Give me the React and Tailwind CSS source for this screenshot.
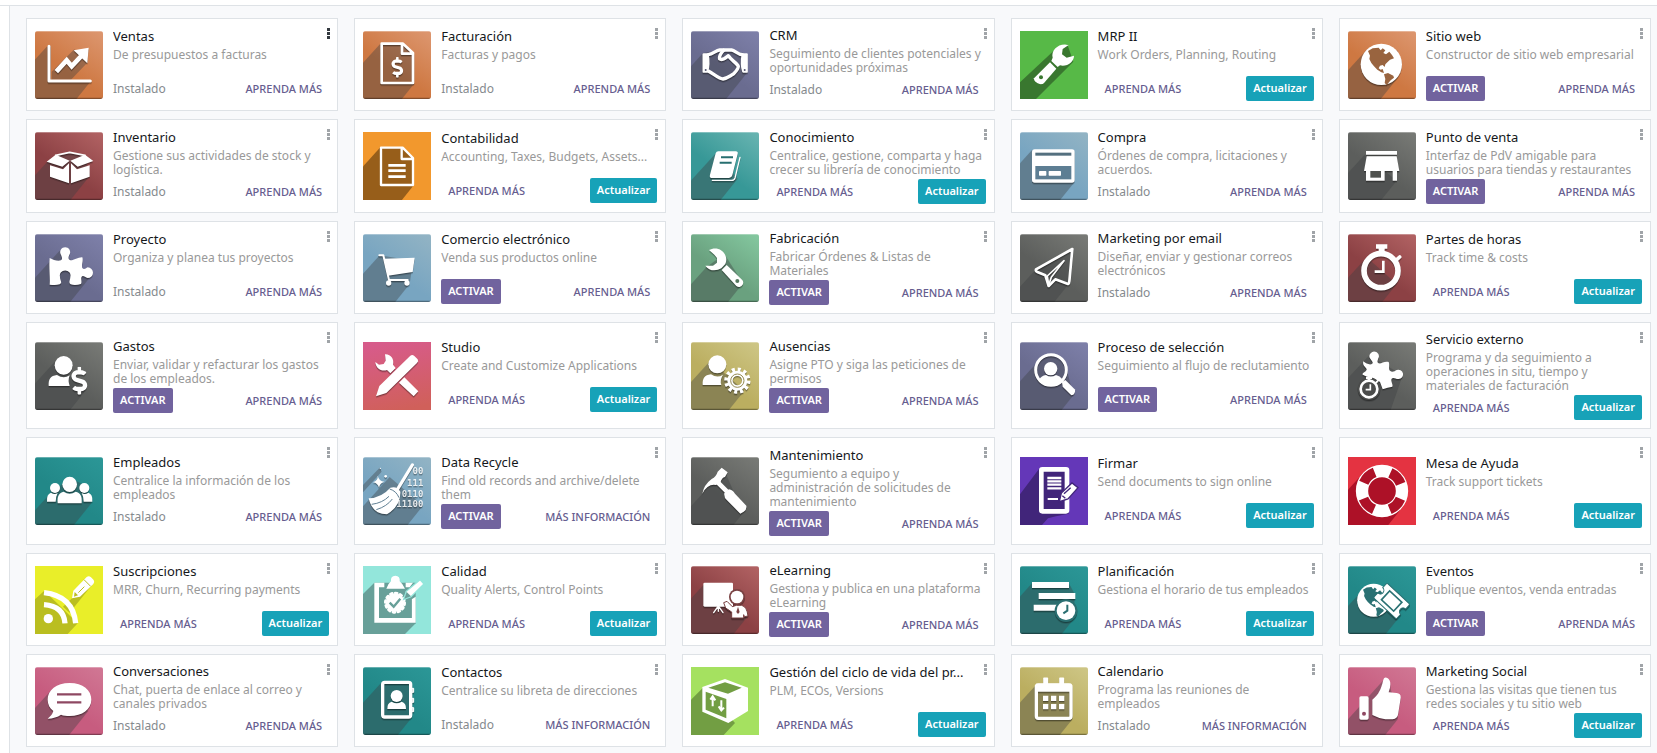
import { FaDollarSign } from 'react-icons/fa';

const W = '#fff';

/* Long diagonal shadow cast from the top-left point (ax, ay) and the bottom-right point (cx, cy). */
function cast(ax, ay, cx, cy, inner = '') {
  return `M${ax},${ay} L0,${ay + ax * 1.1} V204 H${cx - (204 - cy) * 0.8} L${cx},${cy} ${inner} Z`;
}

const PUZZLE =
  'M44,72 C55,78 68,82 78,79 C84,75 80,68 77,61 A15,15 0 1 1 104,61 C100,68 98,76 106,79 C116,80 130,69 142,70 C146,82 138,94 142,102 C146,108 152,104 158,100 A16,16 0 1 1 158,132 C150,130 144,122 140,128 C136,136 142,142 138,150 C128,153 116,154 107,151 C99,145 106,138 106,128 A16,15 0 1 0 75,128 C74,138 84,146 74,151 C64,154 54,153 44,152 C46,130 41,100 44,72 Z';

const THEMES = {
  orange: { a: '#ce7842', b: '#dc956d' },
  red: { a: '#8c4144', b: '#b06162' },
  purple: { a: '#6a6c90', b: '#7d7fa8' },
  gray: { a: '#5c5e5c', b: '#777975' },
  blue: { a: '#78a5c1', b: '#91b3c4' },
  aqua: { a: '#379897', b: '#66b3b0' },
  green: { a: '#6aa17f', b: '#83c69e' },
  khaki: { a: '#bbae60', b: '#cdc584' },
  teal: { a: '#228888', b: '#2b9696' },
  pink: { a: '#c75c7f', b: '#d07693' },
  leaf: { flat: '#57b947', shade: '#39772f' },
  amber: { flat: '#f2982d', shade: '#975e1a' },
  studio: { a: '#d0605a', b: '#d75b8a', square: true, vertical: true },
  violet: { flat: '#6437b8', shade: '#41257a' },
  help: { flat: '#e43341', shade: '#ad1127' },
  yellow: { flat: '#e9ee29', shade: '#babe20' },
  mint: { flat: '#93e6db', shade: '#68a099' },
  lime: { flat: '#a5e160', shade: '#729e43' },
};

const line = { fill: 'none', stroke: W, strokeLinecap: 'round', strokeLinejoin: 'round' };

/* Globe centred on (100, 100) with a radius of 62, land masses in the given colour. */
function Globe({ land }) {
  return (
    <>
      <circle cx="100" cy="100" r="62" fill={W} />
      <path
        d="M60,60 L74,52 L92,50 L98,58 L104,52 L112,58 L106,66 L114,70 L124,62 L132,72 L138,82 L126,86 L118,94 L112,100 L110,108 L104,102 L96,104 L92,112 L98,116 L104,114 L108,126 L100,124 L88,116 L78,106 L70,96 L64,84 L66,74 Z"
        fill={land}
      />
      <path d="M108,130 L120,126 L136,134 L138,140 L128,148 L116,162 L110,156 L112,144 Z" fill={land} />
    </>
  );
}

const ART = {
  ventas: {
    theme: 'orange',
    sh: cast(38, 44, 166, 152, 'L48,146 V44') + ' M118,55 L50,122 V146 H108 L156,96 Z',
    art: () => (
      <>
        <path d="M42,46 V150 H166" {...line} strokeWidth="9" />
        <path d="M64,122 L95,88 L110,106 L140,74" fill="none" stroke={W} strokeWidth="14" />
        <path d="M116,58 L161,50 L157,97 Z" fill={W} />
      </>
    ),
  },
  factura: {
    theme: 'orange',
    sh: cast(54, 36, 152, 160, 'V66 L122,36'),
    art: () => (
      <>
        <path d="M56,38 H120 L150,66 V156 H56 Z M117,40 V68 H150" {...line} strokeWidth="8" />
        <FaDollarSign x="72" y="78" size="62" color={W} />
      </>
    ),
  },
  crm: {
    theme: 'purple',
    sh: cast(36, 66, 166, 128, 'V68 L120,56 L90,56'),
    art: () => (
      <g {...line} strokeWidth="10">
        <path d="M38,70 V122 H48 C53,108 53,88 50,70 Z M167,70 V122 H157 C152,108 152,88 155,70 Z" fill={W} strokeWidth="7" />
        <path d="M52,71 C66,70 74,58 86,57 H122 C132,58 140,70 154,71" />
        <path d="M98,58 C90,66 84,76 86,84 C94,90 104,80 112,74 C120,88 138,96 142,106 C142,116 132,124 126,130 C118,134 108,142 96,144 C84,144 70,130 52,120" />
        <circle cx="44" cy="117" r="3" fill="#54566f" stroke="none" />
        <circle cx="161" cy="117" r="3" fill="#54566f" stroke="none" />
      </g>
    ),
  },
  mrp: {
    theme: 'leaf',
    sh: 'M98,62 L0,154 V204 H48 L160,92 L142,40 Z',
    art: (s) => (
      <>
        <path d="M146,42 L128,54 L126,70 L140,80 L162,74 C162,92 142,108 120,103 L113,108 L94,90 L98,80 C92,56 118,34 146,42Z" fill={W} />
        <path d="M90,94 L109,113 L72,156 C62,166 40,152 42,142 Z" fill={W} />
        <circle cx="63" cy="139" r="6" fill={s} />
      </>
    ),
  },
  web: {
    theme: 'orange',
    sh: cast(56, 56, 148, 142, 'L150,60 L100,42'),
    art: () => <Globe land="#99643f" />,
  },
  inventario: {
    theme: 'red',
    sh: cast(36, 90, 164, 132, 'L150,72 L104,62 L62,72'),
    art: () => (
      <>
        <path d="M62,70 L104,61 L150,70" {...line} strokeWidth="5" />
        <path d="M62,68 L35,89 L82,104 L104,86 Z M150,68 L175,87 L128,104 L106,86 Z" fill={W} />
        <path d="M45,100 L84,112 L102,94 V154 L45,134 Z M164,100 L126,112 L108,94 V154 L164,134 Z" fill={W} />
      </>
    ),
  },
  contabilidad: {
    theme: 'amber',
    sh: cast(52, 46, 152, 160, 'V80 L120,46'),
    art: () => (
      <>
        <path d="M54,47 H119 L150,78 V159 H54 Z M116,48 V81 H150" {...line} strokeWidth="7" />
        <path d="M76,100 H128 M76,116 H128 M76,134 H128" stroke={W} strokeWidth="8" />
      </>
    ),
  },
  conocimiento: {
    theme: 'aqua',
    sh: cast(76, 62, 140, 140),
    art: () => (
      <>
        <path d="M82,58 H134 Q142,58 140,66 L124,130 Q122,138 114,138 H64 Q54,138 57,128 L74,64 Q76,58 82,58 Z" fill={W} />
        <path d="M147,76 L132,138 Q130,145 122,145 H64" {...line} strokeWidth="4" />
        <path d="M90,76 H126 M86,92 H122" stroke="#276f70" strokeWidth="6" />
      </>
    ),
  },
  compra: {
    theme: 'blue',
    sh: cast(36, 54, 162, 152),
    art: () => (
      <>
        <rect x="36" y="52" width="128" height="100" rx="8" fill={W} />
        <rect x="46" y="62" width="108" height="9" fill="#54707f" />
        <rect x="46" y="102" width="108" height="40" fill="#5d7e93" />
        <rect x="57" y="117" width="22" height="14" rx="2" fill={W} />
        <rect x="86" y="117" width="37" height="14" rx="2" fill={W} />
      </>
    ),
  },
  pos: {
    theme: 'gray',
    sh: cast(50, 68, 146, 146),
    art: () => (
      <>
        <path d="M54,57 H147 V68 H54 Z M56,73 H146 L154,117 H147 V146 H134 V117 H110 V146 H54 V117 H48 Z" fill={W} />
        <rect x="67" y="117" width="32" height="20" fill="#50524f" />
      </>
    ),
  },
  proyecto: {
    theme: 'purple',
    sh: cast(74, 50, 168, 126),
    art: () => <path d={PUZZLE} fill={W} />,
  },
  ecommerce: {
    theme: 'blue',
    sh: cast(50, 64, 140, 150, 'L150,80'),
    art: () => (
      <>
        <path d="M49,64 H61 L78,138 H134" {...line} strokeWidth="6" />
        <path d="M64,74 L155,71 L149,114 L75,125 Z" fill={W} />
        <circle cx="77" cy="147" r="8" fill={W} />
        <circle cx="132" cy="147" r="8" fill={W} />
      </>
    ),
  },
  fabricacion: {
    theme: 'green',
    sh: cast(46, 100, 156, 148, 'L100,60'),
    art: () => (
      <>
        <path d="M54,48 C72,38 96,44 104,66 C107,76 106,84 103,90 L91,103 C76,112 54,112 43,95 L66,95 L78,86 V72 L70,62 Z" fill={W} />
        <path d="M107,93 L153,137 C164,148 148,166 136,156 L92,108 Z" fill={W} />
        <circle cx="139" cy="141" r="6" fill="#55785f" />
      </>
    ),
  },
  email: {
    theme: 'gray',
    sh: cast(46, 108, 146, 150, 'L158,44'),
    art: () => (
      <g {...line} strokeWidth="8">
        <path d="M157,45 L48,106 Q46,112 52,114 L76,124 L86,156 L106,136 L144,150 Q148,148 148,142 Z" />
        <path d="M132,80 L82,126 L86,154 L94,130 Z" strokeWidth="5" />
      </g>
    ),
  },
  horas: {
    theme: 'red',
    sh: cast(56, 70, 146, 150),
    art: () => (
      <>
        <circle cx="99" cy="110" r="51" fill="none" stroke={W} strokeWidth="17" />
        <path d="M84,31 H118 V44 H110 V56 H92 V44 H84 Z" fill={W} />
        <path d="M143,80 L155,69" {...line} strokeWidth="11" />
        <path d="M106,80 V113 H80" fill="none" stroke={W} strokeWidth="8" />
      </>
    ),
  },
  gastos: {
    theme: 'gray',
    sh: cast(62, 56, 150, 148),
    art: () => (
      <>
        <ellipse cx="86" cy="70" rx="27" ry="28" fill={W} />
        <path d="M41,132 C40,112 46,101 66,99 Q86,112 104,100 Q98,116 104,132 Z" fill={W} />
        <FaDollarSign x="91" y="74" size="84" color={W} />
      </>
    ),
  },
  studio: {
    theme: 'studio',
    sh: null,
    art: () => (
      <>
        <path d="M66,37 C84,36 94,52 90,68 L98,78 L82,94 L72,84 C56,90 38,80 37,60 L48,68 L62,66 L68,56 Z" fill={W} />
        <path d="M124,106 L166,148 L152,163 L108,122 Z" fill={W} />
        <path d="M39,163 L49,132 L142,41 Q148,36 154,42 L164,52 Q168,58 162,63 L70,153 Z" fill={W} />
      </>
    ),
  },
  ausencias: {
    theme: 'khaki',
    sh: cast(58, 56, 160, 146),
    art: () => (
      <>
        <ellipse cx="79" cy="67" rx="27" ry="27" fill={W} />
        <path d="M35,129 C34,110 40,99 60,97 Q79,110 96,98 Q86,114 91,129 Z" fill={W} />
        <circle cx="139" cy="116" r="22" fill="none" stroke={W} strokeWidth="16" />
        <circle cx="139" cy="116" r="33" fill="none" stroke={W} strokeWidth="13" strokeDasharray="9 8.28" />
        <circle cx="139" cy="116" r="20" fill="none" stroke="#958b52" strokeWidth="3" />
      </>
    ),
  },
  seleccion: {
    theme: 'purple',
    sh: cast(56, 56, 160, 160, 'L136,66 L92,38'),
    art: () => (
      <>
        <circle cx="93" cy="84" r="46" fill="none" stroke={W} strokeWidth="9" />
        <circle cx="92" cy="80" r="20" fill={W} />
        <path d="M58,112 Q64,101 78,99 Q92,108 108,99 Q120,102 127,112 Q112,130 92,130 Q72,130 58,112 Z" fill={W} />
        <path d="M126,120 L136,114 L164,142 Q168,150 160,158 L154,160 L128,134 Z" fill={W} />
      </>
    ),
  },
  servicio: {
    theme: 'gray',
    sh: 'M64,40 L0,108 V204 H128 L164,100 Z',
    art: () => (
      <>
        <path
          d="M46,58 C54,64 64,70 72,66 C77,62 72,58 68,52 A14,14 0 1 1 91,49 C89,56 86,60 92,64 C100,66 110,56 122,60 C126,68 120,80 126,86 C132,92 140,88 146,84 A14,14 0 1 1 152,111 C144,112 136,104 131,110 C127,118 136,126 133,134 C124,136 114,138 104,142 L96,120 C80,106 62,108 44,98 C42,92 56,90 56,82 C56,76 42,72 46,58 Z"
          fill={W}
        />
        <circle cx="63" cy="140" r="34" fill="#4b4c4b" />
        <circle cx="63" cy="141" r="25" fill="none" stroke={W} strokeWidth="8" />
        <path d="M54,104 H72 V111 H67 V118 H59 V111 H54 Z" fill={W} />
        <path d="M85,121 L90,116" {...line} strokeWidth="6" />
        <path d="M67,127 V143 H53" fill="none" stroke={W} strokeWidth="5" />
      </>
    ),
  },
  empleados: {
    theme: 'teal',
    sh: cast(38, 118, 168, 140, 'L148,84 L104,62'),
    art: () => (
      <>
        <ellipse cx="104" cy="82" rx="22" ry="23" fill={W} />
        <path d="M68,139 C66,116 72,108 86,104 Q104,116 122,104 C136,108 142,116 140,139 Z" fill={W} />
        <circle cx="60" cy="93" r="15" fill={W} />
        <circle cx="148" cy="93" r="15" fill={W} />
        <path d="M36,134 Q34,112 48,107 Q58,114 68,108 Q62,120 62,134 Z M172,134 Q174,112 160,107 Q150,114 140,108 Q146,120 146,134 Z" fill={W} />
      </>
    ),
  },
  recycle: {
    theme: 'blue',
    sh: cast(80, 60, 180, 146) + ' M50,32 L0,84 V106 L56,44 Z',
    art: () => (
      <>
        <path d="M44,56 Q48,72 64,74 Q50,78 48,92 Q44,78 30,76 Q46,70 44,56 Z" fill={W} />
        <circle cx="68" cy="58" r="4" fill={W} />
        <circle cx="52" cy="34" r="2" fill={W} />
        <g fill={W} fillOpacity=".85" fontFamily="DejaVu Sans Mono, monospace" fontSize="27" fontWeight="700" textAnchor="end">
          <text x="181" y="52">00</text>
          <text x="181" y="86">111</text>
          <text x="181" y="119">0110</text>
          <text x="181" y="151">11100</text>
        </g>
        <path d="M148,24 L104,96" {...line} strokeWidth="10" />
        <path d="M82,92 Q102,86 112,104 Q114,146 72,172 Q56,172 44,166 Q22,152 17,124 Q56,122 82,92 Z" fill={W} />
        <path d="M80,96 Q100,102 108,122 M26,142 Q58,138 78,118 M40,158 Q72,148 88,126" fill="none" stroke="#5f7f93" strokeWidth="3" />
      </>
    ),
  },
  mantenimiento: {
    theme: 'gray',
    sh: cast(36, 108, 156, 168, 'L100,40'),
    art: () => (
      <>
        <path d="M34,110 Q38,84 62,66 Q76,58 80,44 L92,32 L110,46 L102,60 Q92,62 88,78 L74,84 Q50,80 34,110 Z" fill={W} />
        <path d="M78,74 L108,104" stroke={W} strokeWidth="14" />
        <path d="M100,108 L114,97 Q124,98 132,110 L166,146 Q168,158 158,164 L148,170 L108,130 Q98,122 100,108 Z" fill={W} />
      </>
    ),
  },
  firmar: {
    theme: 'violet',
    sh: 'M57,36 L0,112 V204 H66 L84,184 L108,178 L146,170 V36 Z',
    art: (s) => (
      <>
        <rect x="64" y="37" width="77" height="126" rx="3" fill={s} stroke={W} strokeWidth="14" />
        <path d="M82,63 H124 M82,73 H124 M82,83 H124 M82,94 H124" stroke={W} strokeWidth="7" />
        <path d="M83,126 H114" stroke={W} strokeWidth="6" />
        <path d="M118,134 L124,108 L156,78 L174,92 L144,126 Z" fill={W} stroke={s} strokeWidth="4" />
        <path d="M132,110 L152,92 M127,116 L136,124" stroke={s} strokeWidth="4" />
      </>
    ),
  },
  ayuda: {
    theme: 'help',
    sh: cast(46, 48, 156, 160),
    art: (s) => (
      <>
        <circle cx="102" cy="102" r="44" fill={s} />
        <circle cx="102" cy="102" r="60" fill="none" stroke={W} strokeWidth="37" />
        <circle cx="102" cy="102" r="60" fill="none" stroke={s} strokeWidth="30" strokeDasharray="46 48.25" strokeDashoffset="-24" />
      </>
    ),
  },
  suscripciones: {
    theme: 'yellow',
    sh: 'M28,74 L0,100 V204 H98 L128,172 Z M112,96 L84,122 L104,140 L178,48 Z',
    art: (s) => (
      <>
        <circle cx="40" cy="158" r="14" fill={W} />
        <path d="M27,116 Q86,120 90,172 M27,80 Q114,90 122,172" fill="none" stroke={W} strokeWidth="16" />
        <path d="M111,97 L115,74 L155,33 Q162,28 168,34 L176,42 Q180,48 175,54 L135,92 Z" fill={W} />
        <path d="M147,41 L167,61 M130,80 L148,62" stroke={s} strokeWidth="3" />
        <path d="M119,78 L129,88 L117,92 Z" fill={s} />
      </>
    ),
  },
  calidad: {
    theme: 'mint',
    sh: 'M34,50 L0,84 V204 H126 L158,172 V50 Z',
    art: (s) => (
      <>
        <path d="M64,50 H34 V170 H158 V92 L146,100 V156 H48 V64 H64 Z M128,50 H150 L140,64 H128 Z" fill={W} />
        <path d="M50,66 H146 V156 H50 Z" fill={s} />
        <path d="M70,68 Q76,52 84,46 Q82,30 97,29 Q112,30 110,46 Q118,52 126,68 Z" fill={W} />
        <circle cx="96" cy="110" r="28" fill={W} />
        <circle cx="96" cy="110" r="29" fill="none" stroke={W} strokeWidth="8" strokeLinecap="round" strokeDasharray="6 9.18" />
        <path d="M80,110 L92,122 L112,98" fill="none" stroke={s} strokeWidth="7" />
        <path d="M122,100 L130,76 L171,41 L183,54 L144,92 Z" fill={W} stroke="#93e6db" strokeWidth="4" />
        <path d="M124,98 L131,78 L144,91 Z" fill={s} />
      </>
    ),
  },
  elearning: {
    theme: 'red',
    sh: cast(38, 56, 168, 154),
    art: () => (
      <>
        <rect x="37" y="50" width="89" height="72" rx="4" fill={W} />
        <path d="M82,120 L68,140 M82,120 L96,140 M82,120 V136" {...line} strokeWidth="4" />
        <circle cx="138" cy="93" r="24" fill="#794142" />
        <circle cx="138" cy="93" r="19" fill={W} />
        <path d="M98,110 L108,106 L124,122 L136,118 L152,118 Q168,122 171,150 L160,152 L158,146 V156 H122 V138 L104,126 Z" fill={W} stroke="#794142" strokeWidth="3" />
        <path d="M141,122 L146,138 L141,144 L136,138 Z" fill="#794142" />
      </>
    ),
  },
  planificacion: {
    theme: 'teal',
    sh: cast(36, 52, 162, 158, 'L164,84 L146,50'),
    art: () => (
      <>
        <path d="M36,48 H147 V66 H36 Z M56,81 H166 V99 H56 Z M41,116 H112 V134 H41 Z" fill={W} />
        <circle cx="138" cy="134" r="34" fill="#2a6f71" />
        <circle cx="138" cy="134" r="28" fill={W} />
        <path d="M142,116 V134 L130,142" fill="none" stroke="#2a6f71" strokeWidth="6" />
      </>
    ),
  },
  eventos: {
    theme: 'teal',
    sh: cast(42, 74, 150, 158),
    art: () => (
      <>
        <g transform="translate(-3 23) scale(.8)">
          <Globe land="#2a7173" />
        </g>
        <g transform="rotate(43 131 105)">
          <path
            d="M88,75 Q84,75 84,79 V94 A11,11 0 0 1 84,116 V131 Q84,135 88,135 H174 Q178,135 178,131 V116 A11,11 0 0 1 178,94 V79 Q178,75 174,75 Z"
            fill={W}
            stroke="#2a7173"
            strokeWidth="3"
          />
          <rect x="106" y="87" width="50" height="36" fill={W} stroke="#2a7173" strokeWidth="5" />
        </g>
      </>
    ),
  },
  conversaciones: {
    theme: 'pink',
    sh: cast(50, 68, 160, 132),
    art: () => (
      <>
        <path d="M104,48 C144,48 169,70 169,98 C169,126 142,147 104,147 C94,147 86,146 78,143 Q62,154 38,155 Q52,144 55,132 C44,124 38,112 38,98 C38,70 64,48 104,48 Z" fill={W} />
        <path d="M66,82 H139 M66,106 H139" stroke="#8e4862" strokeWidth="7" />
      </>
    ),
  },
  contactos: {
    theme: 'teal',
    sh: cast(56, 46, 146, 152, 'V46'),
    art: () => (
      <>
        <rect x="59" y="46" width="84" height="104" rx="6" fill="none" stroke={W} strokeWidth="10" />
        <path d="M148,64 H152 V76 H148 Z M148,94 H152 V106 H148 Z M148,122 H152 V134 H148 Z" {...line} fill={W} strokeWidth="3" />
        <circle cx="101" cy="87" r="18" fill={W} />
        <path d="M73,126 Q72,108 86,104 Q101,114 116,104 Q130,108 129,126 Z" fill={W} />
      </>
    ),
  },
  plm: {
    theme: 'lime',
    sh: 'M36,62 L0,98 V204 H98 L132,168 Z',
    art: (s) => (
      <>
        <path d="M102,36 L171,62 V132 L112,168 L34,134 V60 Z" fill={W} />
        <path d="M102,46 L152,62 L111,80 L52,62 Z" fill={s} />
        <path d="M44,74 L106,96 V154 L44,128 Z" fill={s} />
        <path d="M65,118 V92 M58,98 L65,88 L73,100 M91,100 V128 M83,118 L91,130 L99,122" fill="none" stroke={W} strokeWidth="6" />
      </>
    ),
  },
  calendario: {
    theme: 'khaki',
    sh: cast(46, 56, 156, 158, 'V56'),
    art: () => (
      <>
        <rect x="49" y="54" width="104" height="100" rx="6" fill="none" stroke={W} strokeWidth="10" />
        <path d="M48,50 H154 V74 H48 Z" fill={W} />
        <path d="M72,34 H82 V56 H72 Z M120,34 H130 V56 H120 Z" {...line} fill={W} strokeWidth="5" />
        <path d="M69,86 h16 v16 h-16 z M93,86 h16 v16 h-16 z M117,86 h16 v16 h-16 z M69,111 h16 v16 h-16 z M93,111 h16 v16 h-16 z M117,111 h16 v16 h-16 z" fill={W} />
      </>
    ),
  },
  social: {
    theme: 'pink',
    sh: cast(104, 42, 150, 156, 'L122,40'),
    art: () => (
      <>
        <rect x="34" y="88" width="28" height="70" rx="5" fill={W} />
        <circle cx="48" cy="140" r="6" fill="#8e4862" />
        <path d="M73,98 C92,84 100,64 105,42 Q108,28 118,33 Q134,42 122,76 L146,78 Q160,80 158,94 L151,138 Q149,156 134,157 H112 Q92,154 73,144 Z" fill={W} />
      </>
    ),
  },
};

function AppIcon({ name }) {
  const { theme, sh, art } = ART[name];
  const t = THEMES[theme];
  const glossy = !t.flat && !t.square;
  const grad = `grad-${name}`;
  const clip = `clip-${name}`;
  return (
    <svg viewBox="0 0 204 204" className="size-[68px] shrink-0" aria-hidden="true">
      <defs>
        <linearGradient id={grad} x1={t.vertical ? '.6' : '.2'} y1="1" x2={t.vertical ? '.4' : '.9'} y2="0">
          <stop offset="0" stopColor={t.flat || t.a} />
          <stop offset={t.vertical ? '0' : '.4'} stopColor={t.flat || t.a} />
          <stop offset="1" stopColor={t.flat || t.b} />
        </linearGradient>
        <clipPath id={clip}>
          <rect width="204" height="204" rx={glossy ? 8 : 0} />
        </clipPath>
      </defs>
      <g clipPath={`url(#${clip})`}>
        <rect width="204" height="204" fill={`url(#${grad})`} />
        {sh && <path d={sh} fill={t.shade || '#3c3e42'} fillOpacity={t.shade ? 1 : 0.38} />}
        {glossy && <path d="M0,0 H204 V3 H0 Z" fill={W} fillOpacity=".3" />}
        {glossy && <path d="M0,200 H204 V204 H0 Z" fill="#000" fillOpacity=".35" />}
        <g className={t.flat ? '' : 'drop-shadow-[0_4px_2px_rgba(0,0,0,0.4)]'}>{art(t.shade)}</g>
      </g>
    </svg>
  );
}

const LEARN = 'Aprenda más';
const INFO = 'Más información';

const APPS = [
  ['ventas', 'Ventas', 'De presupuestos a facturas', 'installed'],
  ['factura', 'Facturación', 'Facturas y pagos', 'installed'],
  ['crm', 'CRM', 'Seguimiento de clientes potenciales y oportunidades próximas', 'installed'],
  ['mrp', 'MRP II', 'Work Orders, Planning, Routing', 'upgrade'],
  ['web', 'Sitio web', 'Constructor de sitio web empresarial', 'activate'],
  ['inventario', 'Inventario', 'Gestione sus actividades de stock y logística.', 'installed'],
  ['contabilidad', 'Contabilidad', 'Accounting, Taxes, Budgets, Assets...', 'upgrade'],
  ['conocimiento', 'Conocimiento', 'Centralice, gestione, comparta y haga crecer su librería de conocimiento', 'upgrade'],
  ['compra', 'Compra', 'Órdenes de compra, licitaciones y acuerdos.', 'installed'],
  ['pos', 'Punto de venta', 'Interfaz de PdV amigable para usuarios para tiendas y restaurantes', 'activate'],
  ['proyecto', 'Proyecto', 'Organiza y planea tus proyectos', 'installed'],
  ['ecommerce', 'Comercio electrónico', 'Venda sus productos online', 'activate'],
  ['fabricacion', 'Fabricación', 'Fabricar Órdenes & Listas de Materiales', 'activate'],
  ['email', 'Marketing por email', 'Diseñar, enviar y gestionar correos electrónicos', 'installed'],
  ['horas', 'Partes de horas', 'Track time & costs', 'upgrade'],
  ['gastos', 'Gastos', 'Enviar, validar y refacturar los gastos de los empleados.', 'activate'],
  ['studio', 'Studio', 'Create and Customize Applications', 'upgrade'],
  ['ausencias', 'Ausencias', 'Asigne PTO y siga las peticiones de permisos', 'activate'],
  ['seleccion', 'Proceso de selección', 'Seguimiento al flujo de reclutamiento', 'activate'],
  ['servicio', 'Servicio externo', 'Programa y da seguimiento a operaciones in situ, tiempo y materiales de facturación', 'upgrade'],
  ['empleados', 'Empleados', 'Centralice la información de los empleados', 'installed'],
  ['recycle', 'Data Recycle', 'Find old records and archive/delete them', 'activate', INFO],
  ['mantenimiento', 'Mantenimiento', 'Segumiento a equipo y administración de solicitudes de mantenimiento', 'activate'],
  ['firmar', 'Firmar', 'Send documents to sign online', 'upgrade'],
  ['ayuda', 'Mesa de Ayuda', 'Track support tickets', 'upgrade'],
  ['suscripciones', 'Suscripciones', 'MRR, Churn, Recurring payments', 'upgrade'],
  ['calidad', 'Calidad', 'Quality Alerts, Control Points', 'upgrade'],
  ['elearning', 'eLearning', 'Gestiona y publica en una plataforma eLearning', 'activate'],
  ['planificacion', 'Planificación', 'Gestiona el horario de tus empleados', 'upgrade'],
  ['eventos', 'Eventos', 'Publique eventos, venda entradas', 'activate'],
  ['conversaciones', 'Conversaciones', 'Chat, puerta de enlace al correo y canales privados', 'installed'],
  ['contactos', 'Contactos', 'Centralice su libreta de direcciones', 'installed', INFO],
  ['plm', 'Gestión del ciclo de vida del pr...', 'PLM, ECOs, Versions', 'upgrade'],
  ['calendario', 'Calendario', 'Programa las reuniones de empleados', 'installed', INFO],
  ['social', 'Marketing Social', 'Gestiona las visitas que tienen tus redes sociales y tu sitio web', 'upgrade'],
];

function MoreLink({ children }) {
  return (
    <a href="#" className="px-[7px] text-[11px] leading-[25px] font-medium text-[#665d8f] uppercase">
      {children}
    </a>
  );
}

function AppCard({ app, active }) {
  const [icon, title, description, state, link = LEARN] = app;
  return (
    <article className="relative flex items-center gap-[10px] border border-[#dee2e6] bg-white p-2">
      <AppIcon name={icon} />
      <div className="min-w-0 flex-1">
        <h2 className="truncate text-[13px] leading-[17px] text-[#15181b]">{title}</h2>
        <p className="mt-[3px] min-h-[26px] text-[12px] leading-[14px] text-[#999]">{description}</p>
        <div className="mt-[2px] flex h-[25px] items-center justify-between">
          {state === 'installed' && <span className="text-[12px] leading-[25px] text-[#858a8e]">Instalado</span>}
          {state === 'activate' && (
            <button type="button" className="h-[25px] rounded-[2px] bg-[#71639e] px-[7px] text-[11px] font-semibold text-white uppercase">
              Activar
            </button>
          )}
          <MoreLink>{link}</MoreLink>
          {state === 'upgrade' && (
            <button type="button" className="h-[25px] rounded-[2px] bg-[#17a2b8] px-[7px] text-[11px] font-semibold text-white">
              Actualizar
            </button>
          )}
        </div>
      </div>
      <button
        type="button"
        aria-label={`Opciones de ${title}`}
        className={`absolute top-[8px] right-[6px] flex flex-col gap-px p-px ${active ? 'text-[#343a40]' : 'text-[#a0a4a8]'}`}
      >
        <span className="size-[3px] bg-current" />
        <span className="size-[3px] bg-current" />
        <span className="size-[3px] bg-current" />
      </button>
    </article>
  );
}

export default function App() {
  return (
    <div className="flex min-h-screen flex-col bg-white font-['Noto_Sans','Open_Sans',sans-serif]">
      <header className="h-[6px] border-b border-[#dee2e6]" />
      <div className="flex flex-1">
        <aside className="w-[10px] shrink-0 border-r border-[#dee2e6]" />
        <main className="flex-1 bg-[#f8f9fb] pt-3 pr-[6px] pl-4">
          <div className="grid grid-cols-5 grid-rows-[auto_minmax(94px,auto)_auto_auto_minmax(108px,auto)] gap-x-4 gap-y-2">
            {APPS.map((app, i) => (
              <AppCard key={app[0]} app={app} active={i === 0} />
            ))}
          </div>
        </main>
      </div>
    </div>
  );
}
